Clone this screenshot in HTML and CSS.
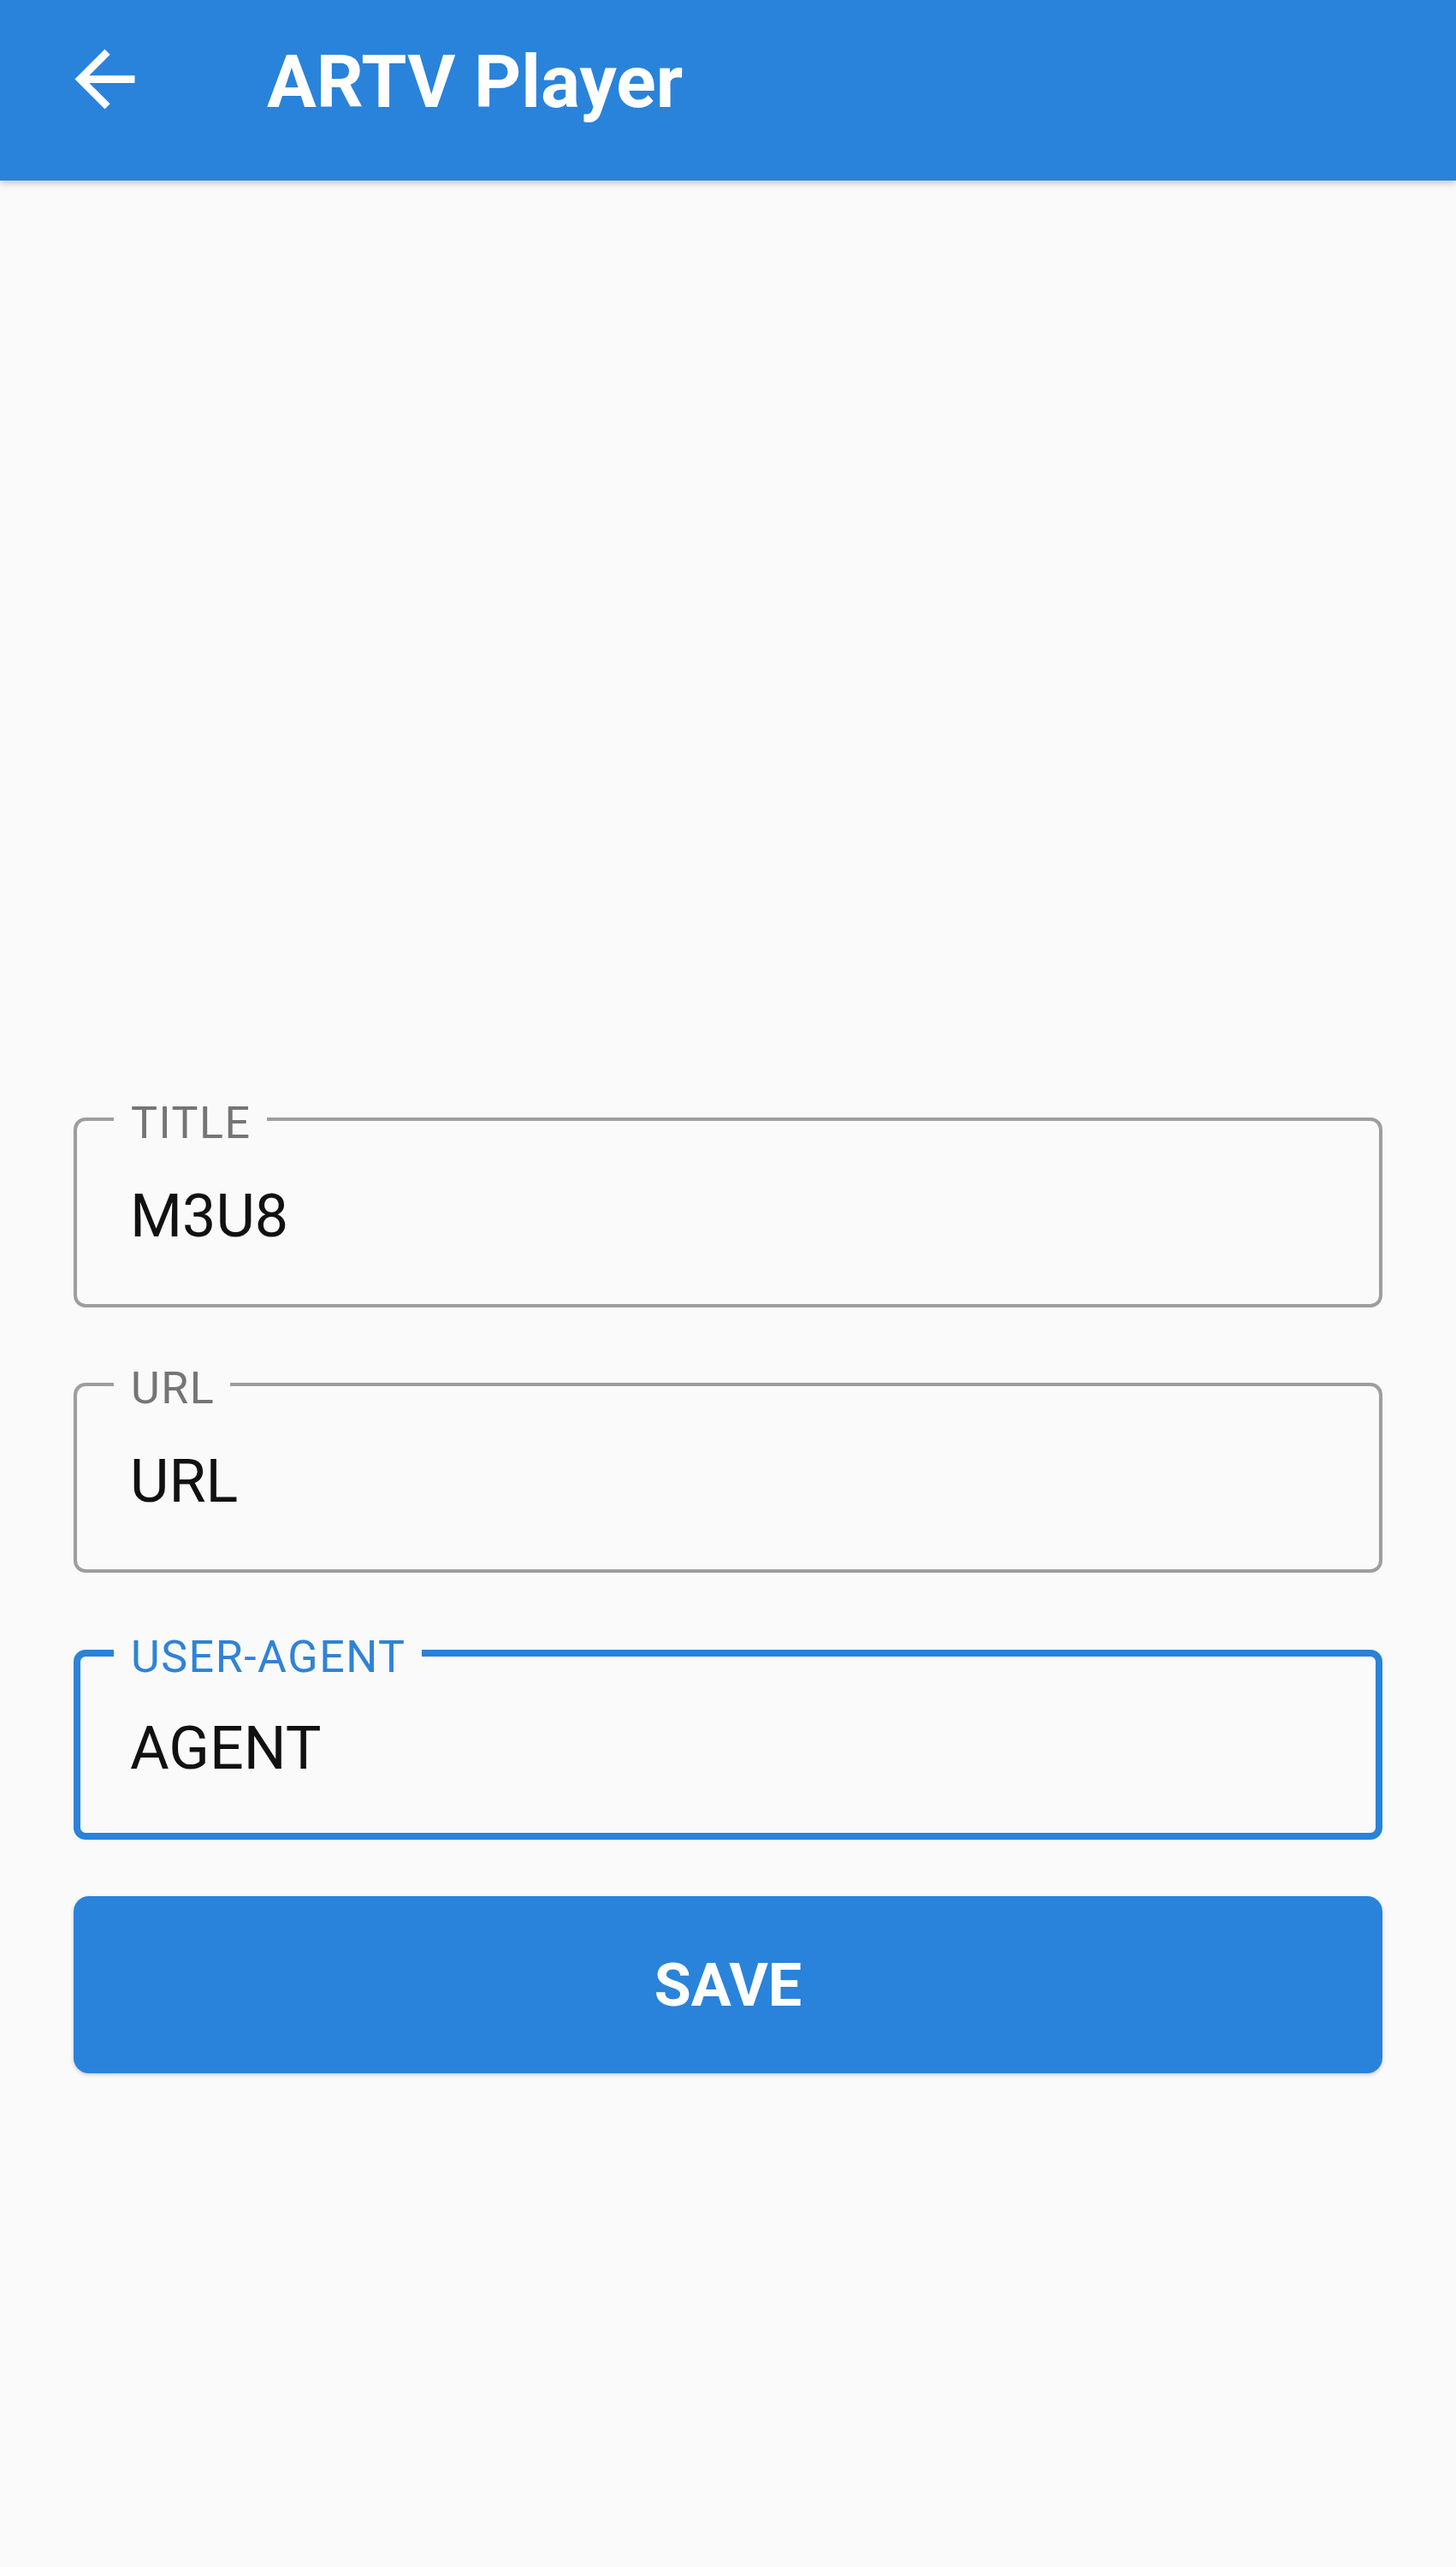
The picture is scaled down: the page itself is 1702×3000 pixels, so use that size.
FILE: index.html
```html
<!DOCTYPE html>
<html lang="en">
<head>
    <meta charset="UTF-8">
    <meta name="viewport" content="width=device-width, initial-scale=1.0">
    <title>ARTV Player</title>
    <link rel="stylesheet" href="styles.css">
</head>
<body>

    <header class="app-bar">
        <button class="back-btn" type="button" aria-label="Back">
            <svg viewBox="0 0 24 24" width="105" height="105">
                <path d="M20 11H7.83l5.59-5.59L12 4l-8 8 8 8 1.41-1.41L7.83 13H20v-2z" fill="#ffffff"/>
            </svg>
        </button>
        <h1 class="app-title">ARTV Player</h1>
    </header>

    <main class="editor">
        <form class="channel-form">
            <fieldset class="field">
                <legend class="field-label">TITLE</legend>
                <input class="field-input" type="text" value="M3U8">
            </fieldset>

            <fieldset class="field">
                <legend class="field-label">URL</legend>
                <input class="field-input" type="text" value="URL">
            </fieldset>

            <!-- focused field -->
            <fieldset class="field is-focused">
                <legend class="field-label">USER-AGENT</legend>
                <input class="field-input" type="text" value="AGENT">
            </fieldset>

            <button class="save-btn" type="button">SAVE</button>
        </form>
    </main>

</body>
</html>
```

FILE: styles.css
```css
* {
    margin: 0;
    padding: 0;
    box-sizing: border-box;
}

body {
    font-family: 'Roboto', 'Noto Sans', sans-serif;
    background: #FAFAFA;
    min-height: 100vh;
}

/* Top bar */
.app-bar {
    height: 211px;
    display: flex;
    align-items: flex-start;
    padding: 40px 0 0 70px;
    background: #2983DB;
    box-shadow: 0 3px 8px rgba(0,0,0,0.22);
    position: relative;
}

.back-btn {
    width: 105px;
    height: 105px;
    border: none;
    background: none;
    display: flex;
}

.app-title {
    margin: 13px 0 0 137px;
    font-size: 86px;
    line-height: 86px;
    font-weight: 700;
    color: #ffffff;
}

/* Form */
.editor {
    padding: 1067px 86px 0;
}

.channel-form {
    display: flex;
    flex-direction: column;
    gap: 60px;
}

.field {
    border: 4px solid #9E9E9E;
    border-radius: 14px;
    padding: 0;
    min-width: 0;
}

.field-label {
    margin-left: 43px;
    padding: 10px 18px 0 20px;
    font-size: 52px;
    line-height: 50px;
    letter-spacing: 1.5px;
    color: #757575;
}

.field-input {
    display: block;
    width: 100%;
    border: none;
    outline: none;
    background: transparent;
    padding: 41px 62px 61px;
    font-family: 'Roboto', 'Noto Sans', sans-serif;
    font-size: 70px;
    line-height: 84px;
    color: #111111;
}

.field.is-focused {
    margin-top: 4px;
    border: 8px solid #2A82D9;
}

.field.is-focused .field-label {
    margin-left: 39px;
    color: #2F83D6;
}

.field.is-focused .field-input {
    padding: 39px 58px 57px;
}

.save-btn {
    margin-top: 6px;
    height: 207px;
    border: none;
    border-radius: 18px;
    background: #2983DB;
    box-shadow: 0 2px 4px rgba(0,0,0,0.18);
    font-family: 'Roboto', 'Noto Sans', sans-serif;
    font-size: 70px;
    font-weight: 700;
    color: #ffffff;
}
```
